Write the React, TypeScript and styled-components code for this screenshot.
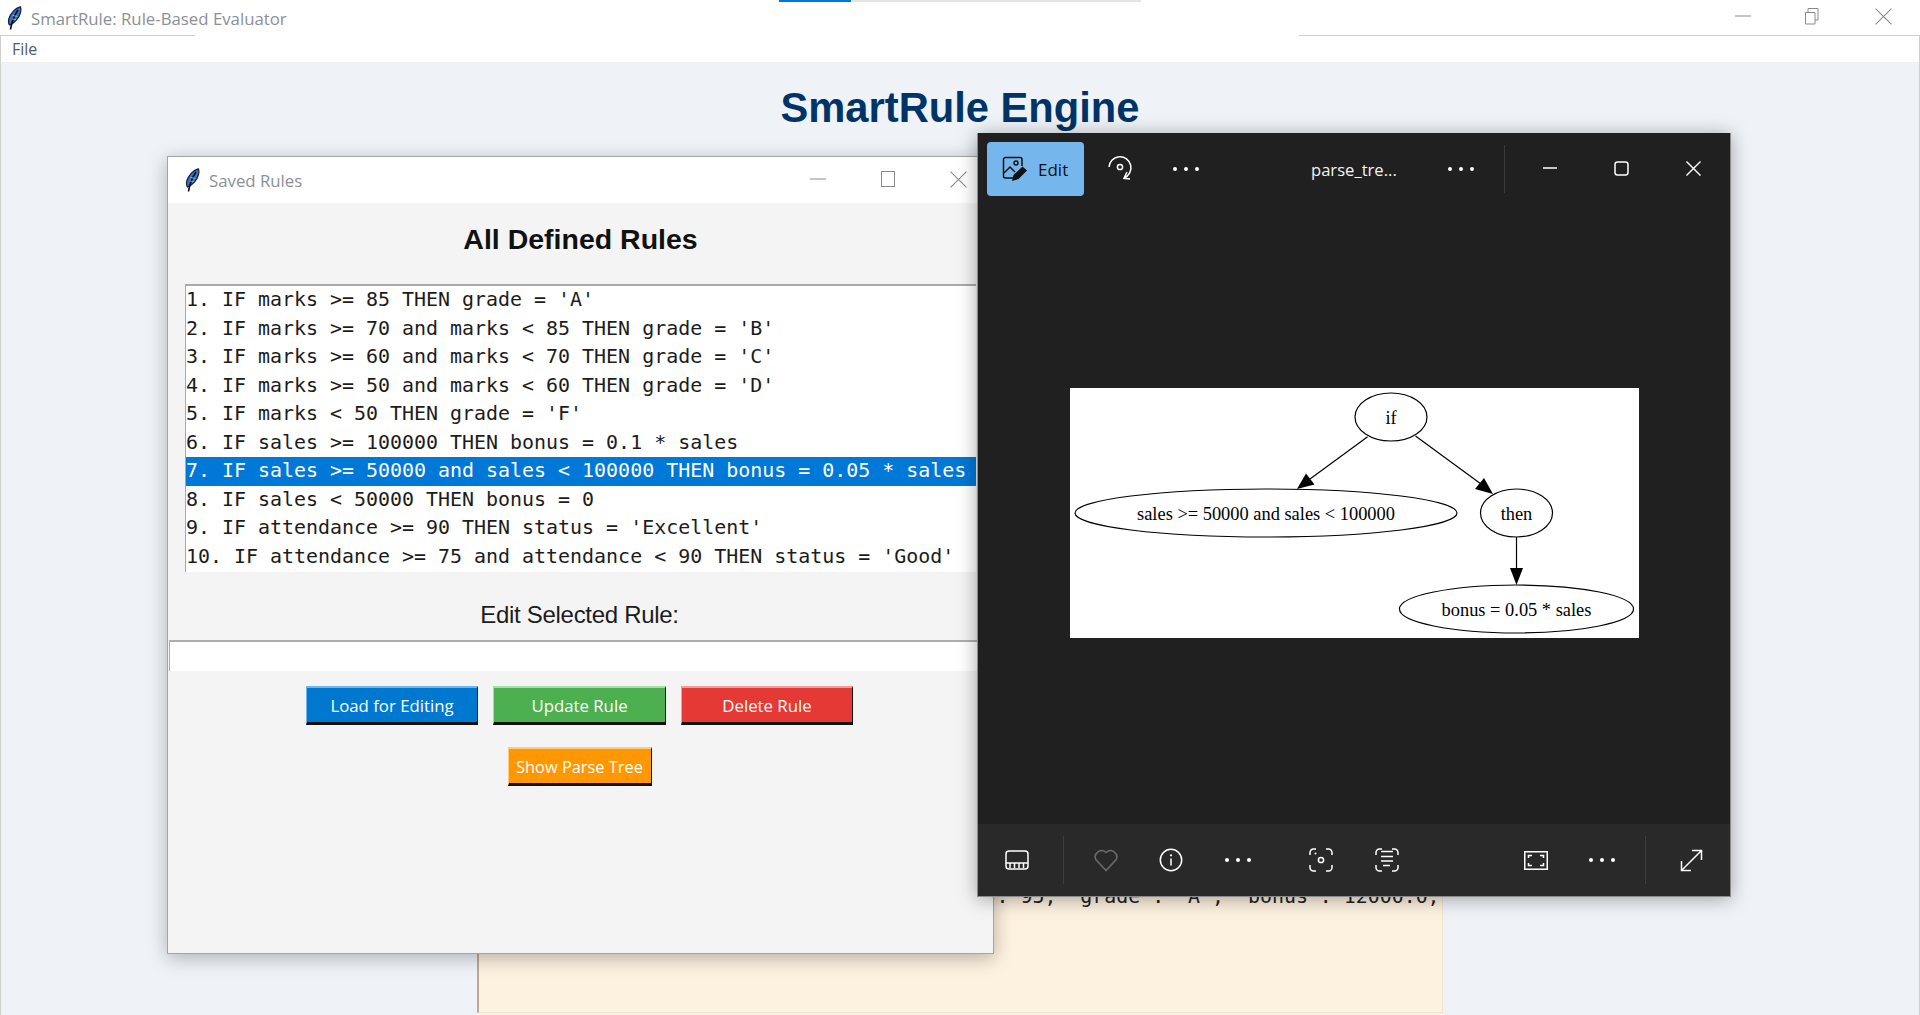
import React, { FC } from 'react';
import styled, { createGlobalStyle } from 'styled-components';

const GlobalStyle = createGlobalStyle`
    html, body {
        margin: 0;
        padding: 0;
        width: 1920px;
        height: 1015px;
        overflow: hidden;
        background: #eff3f8;
    }
    * {
        box-sizing: border-box;
    }
`;

const UI_FONT = `"Open Sans", "Noto Sans", sans-serif`;
const CODE_FONT = `"DejaVu Sans Mono", "Liberation Mono", monospace`;

const Desktop = styled.div`
    position: relative;
    width: 1920px;
    height: 1015px;
    display: flex;
    flex-direction: column;
    overflow: hidden;
    background: #eff3f8;
`;

const MainTitleBar = styled.div`
    position: relative;
    height: 35px;
    display: flex;
    align-items: center;
    background: #fff;
    padding: 0 0 0 7px;
    font-family: ${UI_FONT};
    font-size: 16.8px;
    color: #8b9097;
`;

const TitleText = styled.span`
    margin-left: 9px;
    margin-top: 1px;
`;

const LoadingTrack = styled.div`
    position: absolute;
    top: 0;
    left: 779px;
    width: 362px;
    height: 2px;
    background: #e4e4e4;
`;

const LoadingBar = styled.div`
    width: 72px;
    height: 2px;
    background: #0078d7;
`;

const MainControls = styled.div`
    margin-left: auto;
    display: flex;
    align-items: center;
    height: 100%;
    padding-right: 1px;
    margin-top: -3px;
`;

const ControlSlot = styled.div<{ $w: number }>`
    width: ${(p) => p.$w}px;
    display: flex;
    align-items: center;
    justify-content: center;
`;

const RuleLine = styled.div`
    height: 1px;
    display: flex;
    justify-content: space-between;
    background: #fff;
`;

const RuleSegment = styled.div<{ $w: number }>`
    width: ${(p) => p.$w}px;
    background: #cfcfcf;
`;

const MenuBar = styled.div`
    height: 27px;
    display: flex;
    align-items: center;
    padding-left: 11px;
    background: #fff;
    border-left: 1px solid #cfcfcf;
    border-right: 1px solid #cfcfcf;
    border-bottom: 1px solid #f0f0f0;
    font-family: ${UI_FONT};
    font-size: 16px;
    color: #555b66;
`;

const Content = styled.div`
    flex: 1;
    display: flex;
    flex-direction: column;
    align-items: center;
    border-left: 1px solid #cfcfcf;
    border-right: 1px solid #cfcfcf;
`;

const EngineHeading = styled.h1`
    margin: 0;
    height: 90px;
    display: flex;
    align-items: center;
    font-family: "Liberation Sans", Arial, sans-serif;
    font-size: 41.7px;
    font-weight: 700;
    color: #003366;
`;

const OutputPanel = styled.div`
    margin-top: 447px;
    margin-right: 1px;
    width: 966px;
    height: 413px;
    background: #fdf1df;
    border: 1px solid #f3e3cb;
    border-left: 2px solid #b9ab98;
    padding: 284px 0 0 518px;
    font-family: ${CODE_FONT};
    font-size: 19.9px;
    line-height: 24px;
    color: #222;
    white-space: pre;
`;

const RulesWindow = styled.div`
    position: absolute;
    left: 167px;
    top: 156px;
    width: 827px;
    height: 798px;
    display: flex;
    flex-direction: column;
    background: #f4f4f4;
    border: 1px solid #a2a5a8;
    box-shadow: 0 4px 18px rgba(0, 0, 0, 0.28);
`;

const RulesTitleBar = styled.div`
    height: 46px;
    flex-shrink: 0;
    display: flex;
    align-items: center;
    background: #fff;
    padding-left: 17px;
    font-family: ${UI_FONT};
    font-size: 16.8px;
    color: #8b9097;
`;

const RulesControls = styled.div`
    margin-left: auto;
    display: flex;
    align-items: center;
    margin-top: -2px;
`;

const RulesHeading = styled.h2`
    margin: 0 0 9px;
    height: 72px;
    flex-shrink: 0;
    display: flex;
    align-items: center;
    justify-content: center;
    font-family: "Liberation Sans", Arial, sans-serif;
    font-size: 28.5px;
    font-weight: 700;
    color: #111;
`;

const RuleList = styled.div`
    margin: 0 17px;
    height: 288px;
    flex-shrink: 0;
    background: #fff;
    border-top: 2px solid #a9a9a9;
    border-left: 1px solid #a9a9a9;
`;

const RuleRow = styled.div<{ $selected?: boolean }>`
    height: 28.55px;
    line-height: 26px;
    font-family: ${CODE_FONT};
    font-size: 19.95px;
    white-space: pre;
    color: ${(p) => (p.$selected ? '#fff' : '#1c1c1c')};
    background: ${(p) => (p.$selected ? '#0078d7' : 'transparent')};
`;

const EditLabel = styled.div`
    margin-top: 23px;
    height: 40px;
    flex-shrink: 0;
    display: flex;
    align-items: center;
    justify-content: center;
    padding-right: 2px;
    font-family: "Liberation Sans", Arial, sans-serif;
    font-size: 24px;
    letter-spacing: -0.3px;
    color: #1c1c1c;
`;

const RuleInput = styled.div`
    margin: 5px 0 0 1px;
    height: 31px;
    flex-shrink: 0;
    background: #fff;
    border-top: 2px solid #adadad;
    border-left: 1px solid #adadad;
`;

const ButtonRow = styled.div<{ $top: number }>`
    margin-top: ${(p) => p.$top}px;
    display: flex;
    justify-content: center;
    gap: 15px;
    padding-right: 2px;
`;

const ActionButton = styled.div<{ $w: number; $bg: string; $light: string; $size?: number }>`
    width: ${(p) => p.$w}px;
    height: 39px;
    display: flex;
    align-items: center;
    justify-content: center;
    background: ${(p) => p.$bg};
    border-top: 2px solid ${(p) => p.$light};
    border-left: 1px solid ${(p) => p.$light};
    border-right: 1px solid #111;
    border-bottom: 3px solid #111;
    font-family: ${UI_FONT};
    font-size: ${(p) => p.$size ?? 16.8}px;
    color: #fff;
`;

const PhotoWindow = styled.div`
    position: absolute;
    left: 977px;
    top: 133px;
    width: 754px;
    height: 764px;
    display: flex;
    flex-direction: column;
    background: #202020;
    border-left: 1px solid #8a8a8a;
    border-right: 1px solid #8a8a8a;
    border-bottom: 1px solid #8a8a8a;
    box-shadow: 0 2px 18px rgba(0, 0, 0, 0.35);
    color: #fff;
`;

const PhotoHeader = styled.div`
    height: 69px;
    flex-shrink: 0;
    display: flex;
    align-items: flex-start;
    padding: 9px 0 0 9px;
`;

const EditButton = styled.div`
    width: 97px;
    height: 54px;
    display: flex;
    align-items: center;
    padding-left: 15px;
    gap: 10px;
    border-radius: 4px;
    background: #75b6ec;
    font-family: ${UI_FONT};
    font-size: 17px;
    color: #111;
`;

const HeaderSlot = styled.div<{ $w: number; $ml?: number; $lift?: number }>`
    width: ${(p) => p.$w}px;
    margin-left: ${(p) => p.$ml ?? 0}px;
    height: 54px;
    padding-bottom: ${(p) => p.$lift ?? 0}px;
    display: flex;
    align-items: center;
    justify-content: center;
`;

const FileName = styled.div`
    margin-left: 95px;
    width: 120px;
    height: 54px;
    display: flex;
    align-items: center;
    font-family: ${UI_FONT};
    font-size: 16.6px;
    color: #f4f4f4;
`;

const HeaderDivider = styled.div`
    width: 1px;
    height: 48px;
    margin: 3px 0 0 13px;
    background: #3b3b3b;
`;

const PhotoStage = styled.div`
    flex: 1;
    display: flex;
    align-items: center;
    padding-left: 92px;
`;

const TreeSheet = styled.div`
    width: 569px;
    height: 250px;
    background: #fff;
    line-height: 0;
`;

const PhotoFooter = styled.div`
    height: 72px;
    flex-shrink: 0;
    display: flex;
    align-items: center;
    background: #292929;
`;

const FooterSlot = styled.div<{ $w: number; $ml?: number }>`
    width: ${(p) => p.$w}px;
    margin-left: ${(p) => p.$ml ?? 0}px;
    display: flex;
    align-items: center;
    justify-content: center;
`;

const FooterDivider = styled.div<{ $ml: number }>`
    width: 1px;
    height: 48px;
    margin-left: ${(p) => p.$ml}px;
    background: #3e3e3e;
`;

const Feather: FC = () => (
    <svg width="15" height="24" viewBox="0 0 14 24">
        <path d="M12.800 .8C8 2 3 7 1.300 13c-.6 2.600-.3 4.800.8 6C6.500 17.500 11.500 12.500 13 6.500 13.600 4 13.500 2 12.800 .8Z" fill="#3573c9" stroke="#10213a" strokeWidth="1.200" />
        <path d="M10.500 4C7 9 4.500 14 3 23.500" fill="none" stroke="#0b0b0b" strokeWidth="1.600" />
        <path d="M5 9.500l5 1M4.500 13l4 .5" stroke="#9cc4f2" strokeWidth=".8" />
    </svg>
);

const MinGlyph: FC<{ color?: string; w?: number; sw?: number }> = ({ color = '#8a8a8a', w = 16, sw = 1 }) => (
    <svg width={w} height="16" viewBox={`0 0 ${w} 16`}>
        <line x1="0" y1="8" x2={w} y2="8" stroke={color} strokeWidth={sw} />
    </svg>
);

const BoxGlyph: FC = () => (
    <svg width="16" height="18" viewBox="0 0 16 18">
        <rect x="1.500" y="1.500" width="13" height="15" fill="none" stroke="#8a8a8a" />
    </svg>
);

const RestoreGlyph: FC = () => (
    <svg width="16" height="18" viewBox="0 0 16 18">
        <path d="M1.500 5.500h9.500v11.500h-9.500zM4 5.500v-4h10v11.500h-3" fill="none" stroke="#8a8a8a" />
    </svg>
);

const CloseGlyph: FC<{ color?: string; size?: number; sw?: number }> = ({ color = '#8a8a8a', size = 17, sw = 1 }) => (
    <svg width={size} height={size} viewBox="0 0 16 16">
        <path d="M.5 .5l15 15M15.500 .5l-15 15" fill="none" stroke={color} strokeWidth={sw} />
    </svg>
);

const Dots: FC = () => (
    <svg width="28" height="6" viewBox="0 0 28 6">
        <circle cx="3" cy="3" r="2" fill="#fff" />
        <circle cx="14" cy="3" r="2" fill="#fff" />
        <circle cx="25" cy="3" r="2" fill="#fff" />
    </svg>
);

const EditImageIcon: FC = () => (
    <svg width="26" height="26" viewBox="0 0 26 26">
        <path d="M11 22H3.500A2 2 0 0 1 1.500 20V3.500A2 2 0 0 1 3.500 1.500H18A2 2 0 0 1 20 3.500V10" fill="none" stroke="#111" strokeWidth="1.500" />
        <circle cx="14" cy="7" r="2" fill="none" stroke="#111" strokeWidth="1.400" />
        <path d="M2 17l6-6 5 5" fill="none" stroke="#111" strokeWidth="1.500" />
        <path d="M10 25l1.500-6 9-8.500 4.500 4-8.500 8.500Z" fill="#111" />
    </svg>
);

const RotateIcon: FC = () => (
    <svg width="26" height="28" viewBox="0 0 26 28">
        <path d="M2 12A11 11 0 1 1 17 23" fill="none" stroke="#fff" strokeWidth="1.500" />
        <circle cx="13" cy="12" r="2.600" fill="none" stroke="#fff" strokeWidth="1.500" />
        <path d="M20 17l-3 6.300 6 .7" fill="none" stroke="#fff" strokeWidth="1.500" />
    </svg>
);

const MaxGlyph: FC = () => (
    <svg width="15" height="15" viewBox="0 0 15 15">
        <rect x="1" y="1" width="13" height="13" rx="2.500" fill="none" stroke="#fff" strokeWidth="1.500" />
    </svg>
);

const FilmIcon: FC = () => (
    <svg width="24" height="20" viewBox="0 0 24 20">
        <rect x="1" y="1" width="22" height="18" rx="3" fill="none" stroke="#fff" strokeWidth="1.500" />
        <path d="M1 13h22" stroke="#fff" strokeWidth="1.500" />
        <path d="M5 13v5M9.500 13v5M14 13v5M18.500 13v5" stroke="#fff" strokeWidth="1.500" />
    </svg>
);

const HeartIcon: FC = () => (
    <svg width="26" height="24" viewBox="0 0 26 24">
        <path d="M13 22.500L2.800 11.500A6.300 6.300 0 0 1 13 4.500 6.300 6.300 0 0 1 23.200 11.500Z" fill="none" stroke="#6a6a6a" strokeWidth="1.600" />
    </svg>
);

const InfoIcon: FC = () => (
    <svg width="24" height="24" viewBox="0 0 24 24">
        <circle cx="12" cy="12" r="10.700" fill="none" stroke="#fff" strokeWidth="1.500" />
        <path d="M12 10.500v7" stroke="#fff" strokeWidth="1.500" />
        <circle cx="12" cy="7.300" r="1.100" fill="#fff" />
    </svg>
);

const FocusIcon: FC = () => (
    <svg width="24" height="24" viewBox="0 0 24 24">
        <path d="M1 7V4.500A3.500 3.500 0 0 1 4.500 1H7M17 1h2.500A3.500 3.500 0 0 1 23 4.500V7M23 17v2.500A3.500 3.500 0 0 1 19.500 23H17M7 23H4.500A3.500 3.500 0 0 1 1 19.500V17" fill="none" stroke="#fff" strokeWidth="1.500" />
        <circle cx="12" cy="12" r="2.600" fill="none" stroke="#fff" strokeWidth="1.500" />
        <circle cx="6.500" cy="5.500" r="1" fill="#fff" />
    </svg>
);

const TextScanIcon: FC = () => (
    <svg width="24" height="24" viewBox="0 0 24 24">
        <path d="M1 7V4.500A3.500 3.500 0 0 1 4.500 1H7M17 1h2.500A3.500 3.500 0 0 1 23 4.500V7M23 17v2.500A3.500 3.500 0 0 1 19.500 23H17M7 23H4.500A3.500 3.500 0 0 1 1 19.500V17" fill="none" stroke="#fff" strokeWidth="1.500" />
        <path d="M6 3.500h12M6 8.500h12M6 13h12M8 17.500h7" stroke="#fff" strokeWidth="1.400" />
    </svg>
);

const FitIcon: FC = () => (
    <svg width="24" height="19" viewBox="0 0 24 19">
        <rect x=".75" y=".75" width="22.500" height="17.500" fill="none" stroke="#fff" strokeWidth="1.500" />
        <path d="M4.500 7V4.500H8M16 4.500h3.500V7M19.500 12v2.500H16M8 14.500H4.500V12" fill="none" stroke="#fff" strokeWidth="1.500" />
    </svg>
);

const ExpandIcon: FC = () => (
    <svg width="23" height="23" viewBox="0 0 23 23">
        <path d="M1.500 21.500L21.500 1.500M12 1.500h9.500V11M1.500 12v9.500H11" fill="none" stroke="#fff" strokeWidth="1.500" />
    </svg>
);

const ParseTree: FC = () => (
    <svg width="569" height="250" viewBox="0 0 569 250" fontFamily='"Liberation Serif", serif' fontSize="18.400" fill="#000">
        <g fill="none" stroke="#000" strokeWidth="1.200">
            <ellipse cx="321" cy="29" rx="36" ry="24" />
            <ellipse cx="196" cy="125" rx="191" ry="24" />
            <ellipse cx="446.500" cy="125" rx="36" ry="24" />
            <ellipse cx="446.500" cy="221" rx="117" ry="24" />
            <line x1="297.600" y1="48.700" x2="240" y2="91" />
            <line x1="345.500" y1="48" x2="411" y2="96" />
            <line x1="446.500" y1="149" x2="446.500" y2="182" />
        </g>
        <path d="M227 101L236 85.500 244.500 96.500Z" />
        <path d="M423 106L405 101 414 90Z" />
        <path d="M446.500 197L440 180H453Z" />
        <text x="321" y="36" textAnchor="middle">if</text>
        <text x="196" y="132" textAnchor="middle">sales &gt;= 50000 and sales &lt; 100000</text>
        <text x="446.500" y="132" textAnchor="middle">then</text>
        <text x="446.500" y="228" textAnchor="middle">bonus = 0.05 * sales</text>
    </svg>
);

const rules = [
    "1. IF marks >= 85 THEN grade = 'A'",
    "2. IF marks >= 70 and marks < 85 THEN grade = 'B'",
    "3. IF marks >= 60 and marks < 70 THEN grade = 'C'",
    "4. IF marks >= 50 and marks < 60 THEN grade = 'D'",
    "5. IF marks < 50 THEN grade = 'F'",
    '6. IF sales >= 100000 THEN bonus = 0.1 * sales',
    '7. IF sales >= 50000 and sales < 100000 THEN bonus = 0.05 * sales',
    '8. IF sales < 50000 THEN bonus = 0',
    "9. IF attendance >= 90 THEN status = 'Excellent'",
    "10. IF attendance >= 75 and attendance < 90 THEN status = 'Good'",
];

const App: FC = () => (
    <Desktop>
        <GlobalStyle />
        <MainTitleBar>
            <Feather />
            <TitleText>SmartRule: Rule-Based Evaluator</TitleText>
            <LoadingTrack>
                <LoadingBar />
            </LoadingTrack>
            <MainControls>
                <ControlSlot $w={68}>
                    <MinGlyph />
                </ControlSlot>
                <ControlSlot $w={70}>
                    <RestoreGlyph />
                </ControlSlot>
                <ControlSlot $w={72}>
                    <CloseGlyph />
                </ControlSlot>
            </MainControls>
        </MainTitleBar>
        <RuleLine>
            <RuleSegment $w={195} />
            <RuleSegment $w={621} />
        </RuleLine>
        <MenuBar>File</MenuBar>
        <Content>
            <EngineHeading>SmartRule Engine</EngineHeading>
            <OutputPanel>: 95, 'grade': 'A', 'bonus': 12000.0,</OutputPanel>
        </Content>

        <RulesWindow>
            <RulesTitleBar>
                <Feather />
                <TitleText>Saved Rules</TitleText>
                <RulesControls>
                    <ControlSlot $w={70}>
                        <MinGlyph />
                    </ControlSlot>
                    <ControlSlot $w={70}>
                        <BoxGlyph />
                    </ControlSlot>
                    <ControlSlot $w={70}>
                        <CloseGlyph />
                    </ControlSlot>
                </RulesControls>
            </RulesTitleBar>
            <RulesHeading>All Defined Rules</RulesHeading>
            <RuleList>
                {rules.map((rule, i) => (
                    <RuleRow key={rule} $selected={i === 6}>
                        {rule}
                    </RuleRow>
                ))}
            </RuleList>
            <EditLabel>Edit Selected Rule:</EditLabel>
            <RuleInput />
            <ButtonRow $top={15}>
                <ActionButton $w={172} $bg="#0078d0" $light="#6db6f2">
                    Load for Editing
                </ActionButton>
                <ActionButton $w={173} $bg="#4caf50" $light="#a5e0a7">
                    Update Rule
                </ActionButton>
                <ActionButton $w={172} $bg="#e53935" $light="#f49a98">
                    Delete Rule
                </ActionButton>
            </ButtonRow>
            <ButtonRow $top={22}>
                <ActionButton $w={144} $bg="#ff9800" $light="#ffcb7a" $size={16.4}>
                    Show Parse Tree
                </ActionButton>
            </ButtonRow>
        </RulesWindow>

        <PhotoWindow>
            <PhotoHeader>
                <EditButton>
                    <EditImageIcon />
                    Edit
                </EditButton>
                <HeaderSlot $w={72}>
                    <RotateIcon />
                </HeaderSlot>
                <HeaderSlot $w={60}>
                    <Dots />
                </HeaderSlot>
                <FileName>parse_tre...</FileName>
                <HeaderSlot $w={60}>
                    <Dots />
                </HeaderSlot>
                <HeaderDivider />
                <HeaderSlot $w={70} $ml={10} $lift={2}>
                    <MinGlyph color="#fff" w={14} sw={1.5} />
                </HeaderSlot>
                <HeaderSlot $w={73} $lift={2}>
                    <MaxGlyph />
                </HeaderSlot>
                <HeaderSlot $w={70} $lift={2}>
                    <CloseGlyph color="#fff" size={15} sw={1.5} />
                </HeaderSlot>
            </PhotoHeader>
            <PhotoStage>
                <TreeSheet>
                    <ParseTree />
                </TreeSheet>
            </PhotoStage>
            <PhotoFooter>
                <FooterSlot $w={77}>
                    <FilmIcon />
                </FooterSlot>
                <FooterDivider $ml={8} />
                <FooterSlot $w={84}>
                    <HeartIcon />
                </FooterSlot>
                <FooterSlot $w={46}>
                    <InfoIcon />
                </FooterSlot>
                <FooterSlot $w={88}>
                    <Dots />
                </FooterSlot>
                <FooterSlot $w={78}>
                    <FocusIcon />
                </FooterSlot>
                <FooterSlot $w={54}>
                    <TextScanIcon />
                </FooterSlot>
                <FooterSlot $w={60} $ml={92}>
                    <FitIcon />
                </FooterSlot>
                <FooterSlot $w={50} $ml={11}>
                    <Dots />
                </FooterSlot>
                <FooterDivider $ml={18} />
                <FooterSlot $w={60} $ml={15}>
                    <ExpandIcon />
                </FooterSlot>
            </PhotoFooter>
        </PhotoWindow>
    </Desktop>
);

export default App;
